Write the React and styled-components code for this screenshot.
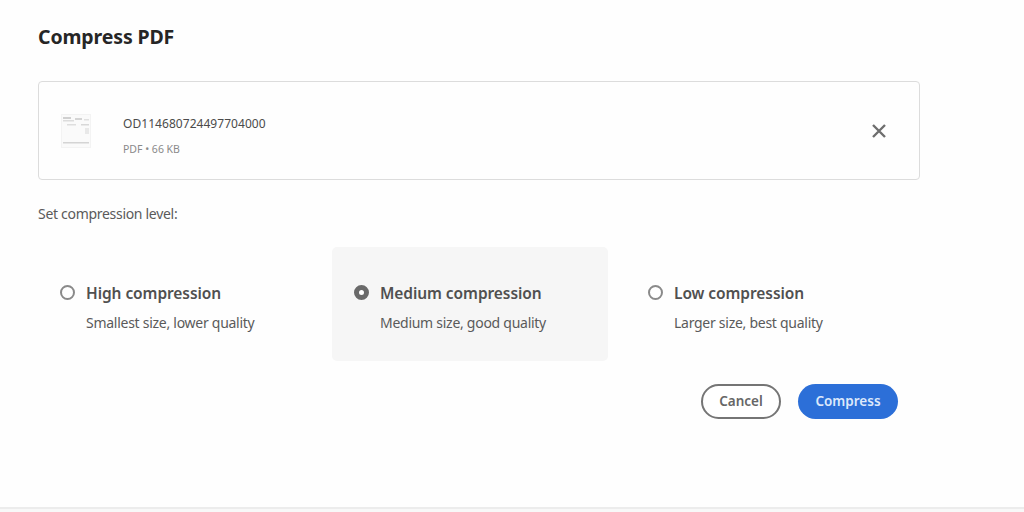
import styled, { createGlobalStyle } from "styled-components"

const GlobalStyle = createGlobalStyle`
    html, body {
        margin: 0;
        padding: 0;
        background: #fefefe;
    }
    * {
        box-sizing: border-box;
    }
`

const options = [
    { title: "High compression", text: "Smallest size, lower quality" },
    { title: "Medium compression", text: "Medium size, good quality", selected: true },
    { title: "Low compression", text: "Larger size, best quality" },
]

const Thumbnail = () => (
    <ThumbBox viewBox="0 0 30 34">
        <rect width="30" height="34" fill="#f3f3f3" />
        <rect x="1" y="1" width="28" height="32" fill="#fafafa" />
        <rect x="2" y="3" width="8" height="2" fill="#d0d0d0" />
        <rect x="2" y="6" width="11" height="1.5" fill="#dcdcdc" />
        <rect x="14" y="4" width="7" height="2" fill="#d4d4d4" />
        <rect x="23" y="5" width="5" height="1.5" fill="#e0e0e0" />
        <rect x="6" y="10" width="9" height="1.5" fill="#dedede" />
        <rect x="20" y="10" width="8" height="1.5" fill="#d8d8d8" />
        <rect x="24" y="14" width="4" height="6" fill="#e8e8e8" />
        <rect x="2" y="28" width="26" height="1.5" fill="#d4d4d4" />
    </ThumbBox>
)

const App = () => {
    return (
        <>
            <GlobalStyle />
            <Page>
                <Title>Compress PDF</Title>
                <FileCard>
                    <Thumbnail />
                    <FileInfo>
                        <FileName>OD114680724497704000</FileName>
                        <FileMeta>PDF • 66 KB</FileMeta>
                    </FileInfo>
                    <CloseIcon viewBox="0 0 16 16">
                        <path d="M2 2 L14 14 M14 2 L2 14" stroke="#6e6e6e" strokeWidth="2.4" fill="none" />
                    </CloseIcon>
                </FileCard>
                <LevelLabel>Set compression level:</LevelLabel>
                <OptionRow>
                    {options.map((item) => (
                        <Option key={item.title} $selected={item.selected}>
                            <Radio $selected={item.selected} />
                            <div>
                                <OptionTitle>{item.title}</OptionTitle>
                                <OptionText>{item.text}</OptionText>
                            </div>
                        </Option>
                    ))}
                </OptionRow>
                <Actions>
                    <CancelButton>Cancel</CancelButton>
                    <CompressButton>Compress</CompressButton>
                </Actions>
            </Page>
            <BottomLine />
        </>
    )
}

const Page = styled.div`
    width: 1024px;
    height: 507px;
    padding: 25px 0 0 38px;
    font-family: "Noto Sans", "Open Sans", sans-serif;
    background: #fefefe;
    overflow: hidden;
`

const Title = styled.h1`
    margin: 0;
    font-size: 19.5px;
    line-height: 23px;
    font-weight: 700;
    color: #262626;
    letter-spacing: -0.13px;
`

const FileCard = styled.div`
    display: flex;
    align-items: center;
    width: 882px;
    height: 99px;
    margin-top: 33px;
    padding: 0 32px 0 22px;
    border: 1px solid #dcdcdc;
    border-radius: 4px;
`

const ThumbBox = styled.svg`
    width: 30px;
    height: 34px;
    flex: none;
`

const FileInfo = styled.div`
    flex: 1;
    margin-left: 32px;
    padding-top: 10px;
`

const FileName = styled.div`
    font-size: 12px;
    line-height: 18px;
    color: #4b4b4b;
    letter-spacing: 0.05px;
`

const FileMeta = styled.div`
    margin-top: 8px;
    font-size: 10.5px;
    line-height: 16px;
    color: #8a8a8a;
`

const CloseIcon = styled.svg`
    width: 16px;
    height: 16px;
    flex: none;
`

const LevelLabel = styled.div`
    margin-top: 24px;
    font-size: 14px;
    line-height: 19px;
    color: #5a5a5a;
    letter-spacing: -0.3px;
`

const OptionRow = styled.div`
    display: grid;
    grid-template-columns: repeat(3, 276px);
    gap: 18px;
    margin-top: 24px;
`

const Option = styled.div`
    display: flex;
    align-items: flex-start;
    gap: 11px;
    height: 114px;
    padding: 35px 0 0 22px;
    border-radius: 5px;
    background: ${(p) => (p.$selected ? "#f6f6f6" : "transparent")};
`

const Radio = styled.span`
    flex: none;
    width: 15px;
    height: 15px;
    margin-top: 3px;
    border-radius: 50%;
    border: ${(p) => (p.$selected ? "5px solid #6a6a6a" : "2px solid #8a8a8a")};
    background: #fff;
`

const OptionTitle = styled.div`
    font-size: 15.5px;
    line-height: 22px;
    font-weight: 600;
    color: #505050;
    letter-spacing: -0.07px;
`

const OptionText = styled.div`
    margin-top: 9px;
    font-size: 14px;
    line-height: 19px;
    color: #5a5a5a;
    letter-spacing: -0.27px;
`

const Actions = styled.div`
    display: flex;
    justify-content: flex-end;
    gap: 17px;
    width: 860px;
    margin-top: 23px;
`

const CancelButton = styled.button`
    width: 80px;
    height: 35px;
    padding: 0 0 2px;
    border: 2px solid #757575;
    border-radius: 18px;
    background: #fff;
    font-family: inherit;
    font-size: 13.5px;
    font-weight: 600;
    color: #666666;
`

const CompressButton = styled.button`
    width: 100px;
    height: 35px;
    padding: 0 0 2px;
    border: none;
    border-radius: 18px;
    background: #2c6fd8;
    font-family: inherit;
    font-size: 13.5px;
    font-weight: 600;
    color: #dce8fb;
`

const BottomLine = styled.div`
    height: 5px;
    border-top: 2px solid #ececec;
    background: #f8f8f8;
`

export default App
